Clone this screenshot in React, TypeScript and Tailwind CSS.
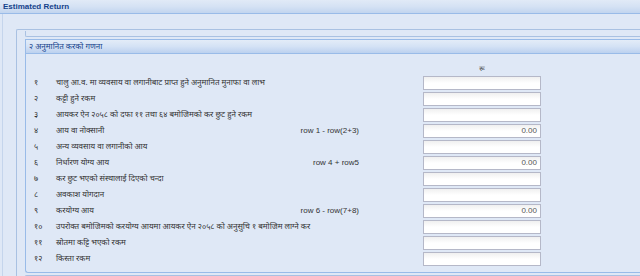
import React from "react";

const rows: { n: string; label: string; formula?: string; value?: string }[] = [
  { n: "१", label: "चालु आ.व. मा व्यवसाय वा लगानीबाट प्राप्त हुने अनुमानित मुनाफा वा लाभ" },
  { n: "२", label: "कट्टी हुने रकम" },
  { n: "३", label: "आयकर ऐन २०५८ को दफा ११ तथा ६४ बमोजिमको कर छुट हुने रकम" },
  { n: "४", label: "आय वा नोक्सानी", formula: "row 1 - row(2+3)", value: "0.00" },
  { n: "५", label: "अन्य व्यवसाय वा लगानीको आय" },
  { n: "६", label: "निर्धारण योग्य आय", formula: "row 4 + row5", value: "0.00" },
  { n: "७", label: "कर छुट भएको संस्थालाई दिएको चन्दा" },
  { n: "८", label: "अवकाश योगदान" },
  { n: "९", label: "करयोग्य आय", formula: "row 6 - row(7+8)", value: "0.00" },
  { n: "१०", label: "उपरोक्त बमोजिमको करयोग्य आयमा आयकर ऐन २०५८ को अनुसुचि १ बमोजिम लाग्ने कर" },
  { n: "११", label: "स्रोतमा कट्टि भएको रकम" },
  { n: "१२", label: "किस्ता रकम" },
];

const dev = "font-['Noto_Sans_Devanagari','Noto_Sans','Liberation_Sans',sans-serif]";

export default function App() {
  return (
    <div className={`w-[640px] h-[276px] overflow-hidden bg-[#dfe8f6] flex flex-col ${dev}`}>
      <div className="h-[14px] shrink-0 bg-gradient-to-b from-[#e1eaf7] via-[#d5e2f4] to-[#c2d5ef] border-b border-[#99bbe8] flex items-center px-[3px]">
        <span className="text-[8px] font-bold text-[#15428b] font-['Liberation_Sans',sans-serif] leading-none">Estimated Return</span>
      </div>
      <div className="flex-1 ml-[2px] border-l border-[#c5d5ec] pt-[15px] pl-[13px]">
        <div className="border-l border-t border-[#a9c1e2] rounded-tl-[2px] h-full pl-[8px] pt-[1px]">
          <div className="h-[6px] border-l border-b border-[#a9c1e2] rounded-bl-[2px]" />
          <div className="mt-[2px] border-l border-t border-b border-[#99bbe8] rounded-bl-[3px] bg-[#dfe8f6]">
            <div className="h-[14px] bg-gradient-to-b from-[#e3ecf8] via-[#d4e2f5] to-[#bcd1ef] border-b border-[#99bbe8] flex items-center pl-[3px]">
              <span className="text-[8px] text-[#15428b] leading-none">२ अनुमानित करको गणना</span>
            </div>
            <div className="pt-[10px] pb-[5px] pl-[8px]">
              <div className="flex h-[11px] items-center">
                <div className="ml-[389px] w-[118px] text-center text-[7px] text-[#444] leading-none">रू</div>
              </div>
              {rows.map((r) => (
                <div key={r.n} className="flex items-center h-[16px]">
                  <div className="w-[22px] text-[8px] text-[#333] leading-none">{r.n}</div>
                  <div className="w-[235px] whitespace-nowrap text-[8px] text-[#333] leading-none">{r.label}</div>
                  <div className="w-[68px] text-right text-[8px] text-[#333] font-['Liberation_Sans',sans-serif] leading-none whitespace-nowrap">
                    {r.formula ?? ""}
                  </div>
                  <div className="ml-[64px] w-[118px] h-[14px] border border-[#b5b8c8] bg-gradient-to-b from-[#f0f0f0] via-white to-white flex items-center justify-end pr-[3px]">
                    <span className="text-[8px] text-[#555] font-['Liberation_Sans',sans-serif] leading-none">{r.value ?? ""}</span>
                  </div>
                </div>
              ))}
            </div>
          </div>
          <div className="mt-[2px] h-[4px] border-l border-t border-[#a9c1e2] rounded-tl-[2px]" />
        </div>
      </div>
    </div>
  );
}
